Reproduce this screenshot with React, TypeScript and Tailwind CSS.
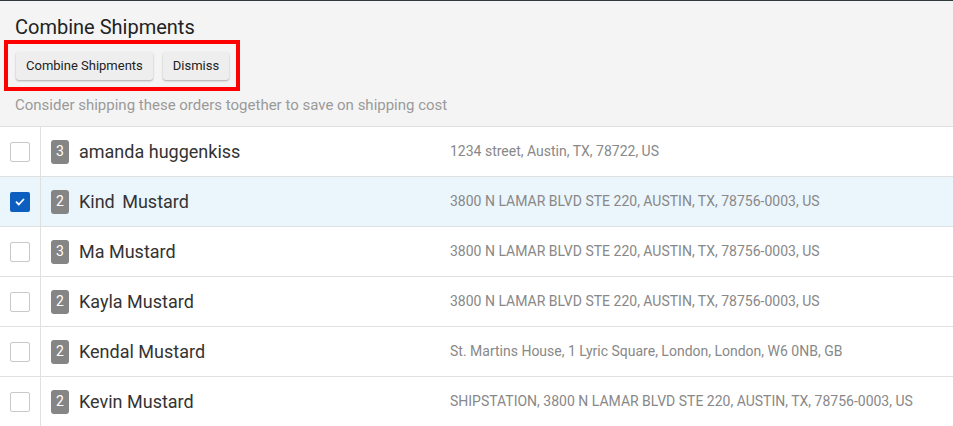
import React from "react";

const rows = [
  { n: 3, name: "amanda huggenkiss", addr: "1234 street, Austin, TX, 78722, US", checked: false },
  { n: 2, name: "Kind Mustard", addr: "3800 N LAMAR BLVD STE 220, AUSTIN, TX, 78756-0003, US", checked: true },
  { n: 3, name: "Ma Mustard", addr: "3800 N LAMAR BLVD STE 220, AUSTIN, TX, 78756-0003, US", checked: false },
  { n: 2, name: "Kayla Mustard", addr: "3800 N LAMAR BLVD STE 220, AUSTIN, TX, 78756-0003, US", checked: false },
  { n: 2, name: "Kendal Mustard", addr: "St. Martins House, 1 Lyric Square, London, London, W6 0NB, GB", checked: false },
  { n: 2, name: "Kevin Mustard", addr: "SHIPSTATION, 3800 N LAMAR BLVD STE 220, AUSTIN, TX, 78756-0003, US", checked: false },
];

export default function App() {
  return (
    <div className="w-[953px] h-[426px] overflow-hidden bg-white font-['Roboto',sans-serif] border-t border-[#2f3a3d]">
      <div className="bg-[#f4f4f4] h-[126px] pl-[15px] pt-[14px] border-b border-[#e0e0e0]">
        <h1 className="text-[20px] leading-[24px] text-[#222]">Combine Shipments</h1>
        <div className="ml-[-11px] mt-[1px] w-[236px] h-[51px] border-[4px] border-[#ff0000] flex items-center gap-[10px] pl-[8px]">
          <button className="h-[28px] px-[10px] rounded-[3px] bg-[#eeeeee] text-[13px] text-[#222] shadow-[0_1px_2px_rgba(0,0,0,0.3)]">
            Combine Shipments
          </button>
          <button className="h-[28px] px-[10px] rounded-[3px] bg-[#eeeeee] text-[13px] text-[#222] shadow-[0_1px_2px_rgba(0,0,0,0.3)]">
            Dismiss
          </button>
        </div>
        <p className="mt-[5px] text-[15px] leading-[18px] text-[#9a9a9a]">
          Consider shipping these orders together to save on shipping cost
        </p>
      </div>
      <div>
        {rows.map((r, i) => (
          <div
            key={i}
            className={`flex h-[50px] border-b border-[#e0e0e0] ${r.checked ? "bg-[#ebf5fc]" : "bg-white"}`}
          >
            <div className="w-[41px] shrink-0 border-r border-[#e0e0e0] flex items-center justify-center">
              {r.checked ? (
                <div className="w-[20px] h-[20px] rounded-[2px] bg-[#0d5fbf] flex items-center justify-center">
                  <svg width="12" height="12" viewBox="0 0 12 12" fill="none">
                    <path d="M2.5 6.2l2.3 2.3 4.7-5" stroke="white" strokeWidth="1.8" strokeLinecap="round" strokeLinejoin="round" />
                  </svg>
                </div>
              ) : (
                <div className="w-[20px] h-[20px] rounded-[2px] border border-[#c8c8c8] bg-white" />
              )}
            </div>
            <div className="flex items-center pl-[10px] w-[409px] shrink-0">
              <span className="w-[18px] h-[24px] rounded-[3px] bg-[#858585] text-white text-[14px] flex items-center justify-center">
                {r.n}
              </span>
              <span className={`ml-[10px] text-[18px] text-[#333] ${r.checked ? "[word-spacing:3px]" : ""}`}>{r.name}</span>
            </div>
            <div className="flex items-center text-[14px] text-[#888] whitespace-nowrap">{r.addr}</div>
          </div>
        ))}
      </div>
    </div>
  );
}
